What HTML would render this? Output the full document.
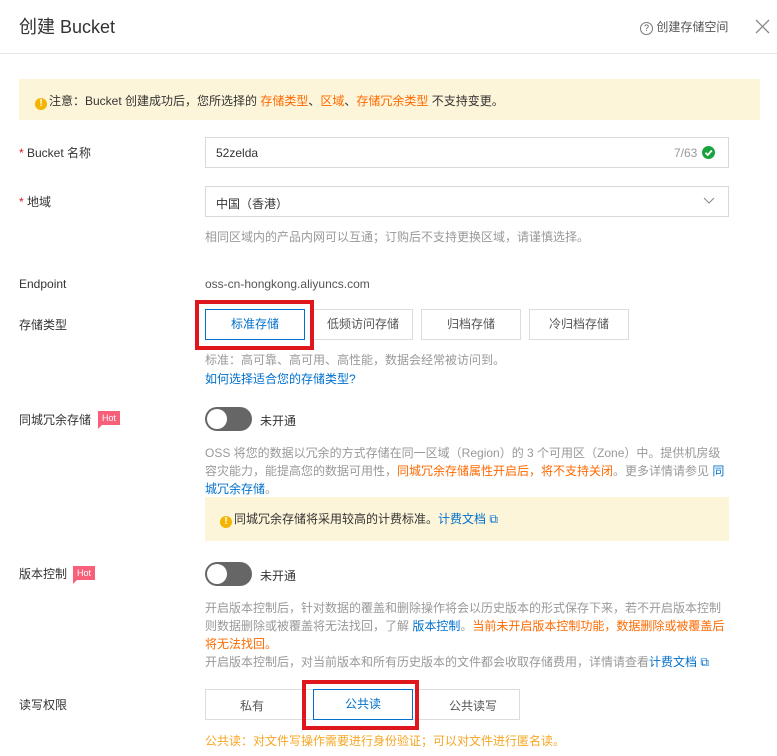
<!DOCTYPE html><html><head><meta charset="utf-8"><style>
*{margin:0;padding:0;box-sizing:border-box}
body{width:777px;height:756px;overflow:hidden;background:#fff;font-family:"Liberation Sans","Noto Sans CJK SC",sans-serif;font-size:12px;color:#333;position:relative}
.a{position:absolute;white-space:nowrap}
.g{color:#999}.o{color:#ff6a00}.b{color:#0070cc}
.btn{position:absolute;height:31px;border:1px solid #dcdcdc;background:#fff;text-align:center;line-height:29px;color:#555;font-size:12px}
.red{position:absolute;border:4px solid #e0161d}
.hot{position:absolute;background:#f8607a;color:#fff;font-size:9px;line-height:14px;padding:0 4px;height:14px}
.hot:after{content:"";position:absolute;left:0;bottom:-4px;border-left:4px solid #f8607a;border-bottom:4px solid transparent}
.tg{position:absolute;width:47px;height:24px;border-radius:12px;background:#666}
.tg:after{content:"";position:absolute;left:2px;top:2px;width:20px;height:20px;border-radius:50%;background:#fff}
.p{position:absolute;left:205px;width:525px;line-height:18px;color:#999;font-size:12px}
.warn{display:inline-block;width:12px;height:12px;border-radius:50%;background:#f5b400;color:#fff;font-size:10px;line-height:12px;text-align:center;font-weight:bold;vertical-align:-2px;margin-right:2px;position:relative;top:-1px}
</style></head><body>
<div class="a" style="left:19px;top:13px;font-size:18px;color:#333">创建 Bucket</div>
<div class="a" style="left:640px;top:18px;color:#555"><span style="display:inline-block;width:13px;height:13px;border:1px solid #777;border-radius:50%;font-size:9px;line-height:11px;text-align:center;vertical-align:0">?</span> 创建存储空间</div>
<svg class="a" style="left:755px;top:19px" width="15" height="15"><path d="M1 1L14 14M14 1L1 14" stroke="#888" stroke-width="1.3"/></svg>
<div class="a" style="left:0;top:53px;width:777px;height:1px;background:#e6e6e6"></div>
<div class="a" style="left:19px;top:79px;width:741px;height:41px;background:#fdf5d9"></div>
<div class="a" style="left:35px;top:92px"><span class="warn">!</span>注意：Bucket 创建成功后，您所选择的 <span class="o">存储类型</span>、<span class="o">区域</span>、<span class="o">存储冗余类型</span> 不支持变更。</div>
<div class="a" style="left:19px;top:144px"><span style="color:#e0161d">*</span> Bucket 名称</div>
<div class="a" style="left:205px;top:137px;width:524px;height:31px;border:1px solid #d9d9d9"></div>
<div class="a" style="left:216px;top:146px">52zelda</div>
<div class="a g" style="left:674px;top:146px">7/63</div>
<svg class="a" style="left:702px;top:146px" width="13" height="13"><circle cx="6.5" cy="6.5" r="6.5" fill="#1aa33c"/><path d="M3.5 6.8L5.8 9L9.8 4.5" stroke="#fff" stroke-width="1.8" fill="none"/></svg>
<div class="a" style="left:19px;top:193px"><span style="color:#e0161d">*</span> 地域</div>
<div class="a" style="left:205px;top:186px;width:524px;height:31px;border:1px solid #d9d9d9"></div>
<div class="a" style="left:216px;top:195px">中国（香港）</div>
<svg class="a" style="left:703px;top:197px" width="12" height="8"><path d="M1 1L6 6L11 1" stroke="#888" fill="none"/></svg>
<div class="a g" style="left:205px;top:228px">相同区域内的产品内网可以互通；订购后不支持更换区域，请谨慎选择。</div>
<div class="a" style="left:19px;top:277px">Endpoint</div>
<div class="a" style="left:205px;top:277px;color:#555">oss-cn-hongkong.aliyuncs.com</div>
<div class="a" style="left:19px;top:316px">存储类型</div>
<div class="btn" style="left:205px;top:309px;width:100px;border-color:#0070cc;color:#0070cc">标准存储</div>
<div class="btn" style="left:313px;top:309px;width:100px">低频访问存储</div>
<div class="btn" style="left:421px;top:309px;width:100px">归档存储</div>
<div class="btn" style="left:529px;top:309px;width:100px">冷归档存储</div>
<div class="red" style="left:195px;top:300px;width:119px;height:50px"></div>
<div class="a g" style="left:205px;top:351px">标准：高可靠、高可用、高性能，数据会经常被访问到。</div>
<div class="a b" style="left:205px;top:370px">如何选择适合您的存储类型?</div>
<div class="a" style="left:19px;top:411px">同城冗余存储</div>
<div class="hot" style="left:98px;top:411px">Hot</div>
<div class="tg" style="left:205px;top:407px"></div>
<div class="a" style="left:260px;top:412px">未开通</div>
<div class="p" style="top:444px">OSS 将您的数据以冗余的方式存储在同一区域（Region）的 3 个可用区（Zone）中。提供机房级容灾能力，能提高您的数据可用性，<span class="o">同城冗余存储属性开启后，将不支持关闭</span>。更多详情请参见 <span class="b">同城冗余存储</span>。</div>
<div class="a" style="left:205px;top:497px;width:524px;height:44px;background:#fdf5d9"></div>
<div class="a" style="left:220px;top:510px"><span class="warn">!</span>同城冗余存储将采用较高的计费标准。<span class="b">计费文档 ⧉</span></div>
<div class="a" style="left:19px;top:565px">版本控制</div>
<div class="hot" style="left:73px;top:566px">Hot</div>
<div class="tg" style="left:205px;top:562px"></div>
<div class="a" style="left:260px;top:567px">未开通</div>
<div class="p" style="top:599px">开启版本控制后，针对数据的覆盖和删除操作将会以历史版本的形式保存下来，若不开启版本控制则数据删除或被覆盖将无法找回，了解 <span class="b">版本控制</span>。<span class="o">当前未开启版本控制功能，数据删除或被覆盖后将无法找回。</span><br>开启版本控制后，对当前版本和所有历史版本的文件都会收取存储费用，详情请查看<span class="b">计费文档 ⧉</span></div>
<div class="a" style="left:19px;top:696px">读写权限</div>
<div class="btn" style="left:205px;top:689px;width:315px"></div>
<div class="a" style="left:240px;top:697px;color:#555">私有</div>
<div class="a" style="left:449px;top:697px;color:#555">公共读写</div>
<div class="btn" style="left:313px;top:689px;width:100px;border-color:#0070cc;color:#0070cc">公共读</div>
<div class="red" style="left:302px;top:680px;width:117px;height:50px"></div>
<div class="a" style="left:205px;top:732px;color:#f5a623">公共读：对文件写操作需要进行身份验证；可以对文件进行匿名读。</div>
</body></html>
